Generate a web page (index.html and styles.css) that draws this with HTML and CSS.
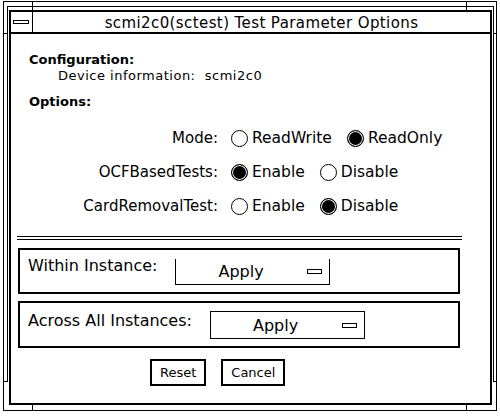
FILE: index.html
```html
<!DOCTYPE html>
<html>
<head>
<meta charset="utf-8">
<link rel="stylesheet" href="styles.css">
</head>
<body>
<div class="frame">
  <span class="line2"></span>
  <span class="tick tv tl"></span>
  <span class="tick tv tr"></span>
  <span class="tick tv bl"></span>
  <span class="tick tv br"></span>
  <span class="tick th lt"></span>
  <span class="tick th lb"></span>
  <span class="tick th rt"></span>
  <span class="tick th rb"></span>
  <div class="win">
    <div class="titlebar">
      <div class="menubtn"><span class="menumark"></span></div>
      <div class="title">scmi2c0(sctest) Test Parameter Options</div>
    </div>
    <div class="body">
      <div class="section">Configuration:</div>
      <div class="info">Device information:  scmi2c0</div>
      <div class="section opts">Options:</div>
      <div class="rows">
        <div class="row">
          <span class="label">Mode:</span>
          <span class="choice"><span class="radio"></span><span class="ctext">ReadWrite</span></span>
          <span class="choice"><span class="radio on"></span><span class="ctext">ReadOnly</span></span>
        </div>
        <div class="row">
          <span class="label">OCFBasedTests:</span>
          <span class="choice"><span class="radio on"></span><span class="ctext">Enable</span></span>
          <span class="choice"><span class="radio"></span><span class="ctext">Disable</span></span>
        </div>
        <div class="row">
          <span class="label">CardRemovalTest:</span>
          <span class="choice"><span class="radio"></span><span class="ctext">Enable</span></span>
          <span class="choice"><span class="radio on"></span><span class="ctext">Disable</span></span>
        </div>
      </div>
      <div class="sep"></div>
      <div class="group g1">
        <span class="glabel">Within Instance:</span>
        <div class="menu m1"><span class="mtext">Apply</span><span class="mind"></span></div>
      </div>
      <div class="group g2">
        <span class="glabel">Across All Instances:</span>
        <div class="menu m2"><span class="mtext">Apply</span><span class="mind"></span></div>
      </div>
      <div class="actions">
        <button class="btn">Reset</button>
        <button class="btn">Cancel</button>
      </div>
    </div>
  </div>
</div>
</body>
</html>
```
FILE: styles.css
```css
html, body {
  margin: 0;
  padding: 0;
  background: #fff;
}
body {
  font-family: "DejaVu Sans", "Liberation Sans", sans-serif;
  color: #000;
  width: 500px;
  height: 416px;
  overflow: hidden;
}
.frame {
  position: relative;
  box-sizing: border-box;
  margin-left: 3px;
  margin-top: 1px;
  width: 494px;
  height: 410px;
  border: 1px solid #000;
  padding: 8px 0 0 5px;
}
.line2 {
  position: absolute;
  left: 3px;
  top: 4px;
  width: 487px;
  height: 376px;
  box-sizing: border-box;
  border: 1px solid #000;
  border-bottom: none;
}
.tick {
  position: absolute;
  background: #000;
}
.tv { width: 1px; }
.th { height: 1px; }
.tl { left: 28px; top: 0; height: 8px; }
.tr { left: 462px; top: 0; height: 8px; }
.bl { left: 28px; top: 403px; height: 5px; }
.br { left: 462px; top: 403px; height: 5px; }
.lt { left: 0; top: 31px; width: 3px; }
.lb { left: 0; top: 379px; width: 3px; }
.rt { left: 490px; top: 31px; width: 2px; }
.rb { left: 490px; top: 379px; width: 2px; }

.win {
  position: relative;
  box-sizing: border-box;
  width: 483px;
  height: 395px;
  border: 2px solid #000;
  background: #fff;
}
.titlebar {
  display: flex;
  height: 22px;
  box-sizing: border-box;
  border-bottom: 2px solid #000;
}
.menubtn {
  width: 22px;
  box-sizing: border-box;
  border-right: 1px solid #000;
  display: flex;
  align-items: center;
  padding-left: 2px;
}
.menumark {
  display: block;
  width: 16px;
  height: 4px;
  box-sizing: border-box;
  border: 1px solid #000;
}
.title {
  flex: 1;
  text-align: center;
  font-size: 15px;
  letter-spacing: 0.4px;
  line-height: 20px;
  padding-top: 1px;
  white-space: nowrap;
}
.body {
  padding-top: 18px;
}
.section {
  font-weight: bold;
  font-size: 13px;
  line-height: 16px;
  padding-left: 18px;
}
.info {
  font-size: 13px;
  letter-spacing: 0.5px;
  line-height: 16px;
  padding-left: 47px;
  white-space: pre;
}
.opts {
  margin-top: 10px;
}
.rows {
  margin-top: 11px;
}
.row {
  display: flex;
  align-items: center;
  height: 34px;
  font-size: 15px;
  line-height: 17px;
}
.label {
  width: 207px;
  text-align: right;
  margin-right: 13px;
  white-space: nowrap;
}
.choice {
  display: flex;
  align-items: center;
  margin-right: 15px;
  font-size: 15.5px;
}
.radio {
  display: block;
  width: 17px;
  height: 17px;
  box-sizing: border-box;
  border: 1px solid #000;
  border-radius: 50%;
  background: #fff;
  margin-right: 4px;
}
.radio.on {
  background: #000;
  box-shadow: inset 0 0 0 1px #fff;
}
.sep {
  margin: 13px 0 0 6px;
  width: 445px;
  height: 2px;
  border-top: 1px solid #000;
  border-bottom: 1px solid #000;
}
.group {
  display: flex;
  align-items: flex-start;
  gap: 18px;
  box-sizing: border-box;
  width: 442px;
  margin-left: 7px;
  border: 2px solid #000;
  padding-left: 8px;
  font-size: 16px;
  line-height: 19px;
}
.g1 {
  margin-top: 8px;
  height: 46px;
  padding-top: 6px;
}
.g2 {
  margin-top: 7px;
  height: 47px;
  padding-top: 8px;
}
.glabel {
  white-space: nowrap;
}
.menu {
  display: flex;
  align-items: center;
  box-sizing: border-box;
  width: 155px;
  border: 1px solid #000;
  padding-left: 42px;
}
.m1 {
  margin-top: 3px;
  border-top: none;
  padding-top: 3px;
  padding-bottom: 3px;
}
.m2 {
  padding-top: 4px;
  padding-bottom: 3px;
}
.mtext {
  width: 89px;
}
.mind {
  display: block;
  width: 15px;
  height: 5px;
  box-sizing: border-box;
  border: 1px solid #000;
}
.actions {
  display: flex;
  gap: 15px;
  margin: 11px 0 0 139px;
}
.btn {
  font-family: "DejaVu Sans", "Liberation Sans", sans-serif;
  font-size: 13px;
  line-height: 23px;
  height: 27px;
  box-sizing: border-box;
  border: 2px solid #000;
  border-radius: 0;
  background: #fff;
  color: #000;
  padding: 0 8px;
  margin: 0;
}
```
